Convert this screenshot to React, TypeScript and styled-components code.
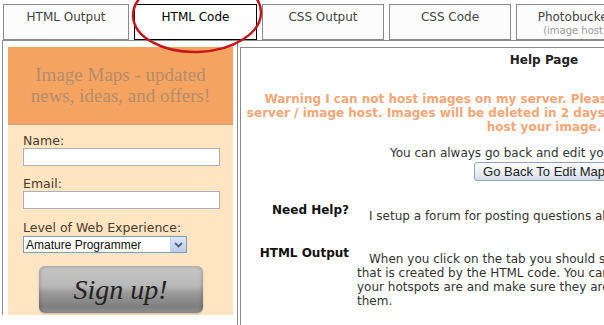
import React from 'react';
import styled, { createGlobalStyle } from 'styled-components';

const GlobalStyle = createGlobalStyle`
  html, body {
    margin: 0;
    padding: 0;
    background: #ffffff;
    overflow: hidden;
  }
  body {
    font-family: "DejaVu Sans", Verdana, sans-serif;
  }
`;

const Page = styled.div`
  position: relative;
  width: 850px;
  padding: 4px 0 0 2px;
`;

const TabBar = styled.div`
  display: flex;
  gap: 5px;
  margin-left: 1px;
`;

const Tab = styled.div<{ $active?: boolean; $width: number }>`
  box-sizing: border-box;
  width: ${(p) => p.$width}px;
  height: 36px;
  padding-top: 5px;
  border: 1px solid ${(p) => (p.$active ? '#000000' : '#8a8a8a')};
  background: ${(p) => (p.$active ? '#ffffff' : '#fcfcfc')};
  color: ${(p) => (p.$active ? '#000000' : '#444444')};
  font-size: 12px;
  line-height: 15px;
  text-align: center;
  white-space: nowrap;
  overflow: hidden;
`;

const TabSub = styled.div`
  font-size: 10px;
  line-height: 11px;
  color: #9a9a9a;
`;

const Content = styled.div`
  display: flex;
  align-items: flex-start;
`;

const Sidebar = styled.div`
  width: 225px;
  padding: 6px 4px 0 5px;
  border-top: 1px solid #8c8c8c;
  border-left: 1px solid #8c8c8c;
`;

const Promo = styled.div`
  box-sizing: border-box;
  height: 78px;
  padding-top: 17px;
  background: #f4a460;
  border-bottom: 2px solid #dba273;
  color: #b38c6c;
  font-family: "Liberation Serif", "Times New Roman", serif;
  font-size: 19px;
  line-height: 21px;
  text-align: center;
`;

const SignupForm = styled.div`
  display: flex;
  flex-direction: column;
  padding: 9px 13px 2px 15px;
  background: #ffe5c2;
`;

const FieldLabel = styled.div<{ $gap?: number }>`
  margin-top: ${(p) => p.$gap ?? 0}px;
  font-size: 12.5px;
  line-height: 14px;
  color: #4a3b2b;
`;

const TextInput = styled.input`
  box-sizing: border-box;
  width: 197px;
  height: 18px;
  margin: 0;
  border: 1px solid #a9b0b8;
  background: #ffffff;
`;

const SelectBox = styled.div`
  box-sizing: border-box;
  display: flex;
  align-items: center;
  width: 164px;
  height: 17px;
  margin-top: 1px;
  border: 1px solid #7f9db9;
  background: #ffffff;
`;

const SelectText = styled.span`
  flex: 1;
  padding-left: 2px;
  font-family: "Liberation Sans", Arial, sans-serif;
  font-size: 12px;
  color: #111111;
`;

const SelectArrow = styled.span`
  display: flex;
  align-items: center;
  justify-content: center;
  width: 15px;
  height: 15px;
  background: linear-gradient(#dfe8f8, #b9cbec);
  border-left: 1px solid #c3d3f0;
`;

const SignupButton = styled.div`
  align-self: center;
  margin: 13px 0 0 -2px;
  width: 164px;
  height: 47px;
  border-radius: 6px;
  background: linear-gradient(
    to bottom,
    #c8c8c8 0%,
    #b8b8b8 42%,
    #999999 58%,
    #7e7e7e 88%,
    #9c9c9c 100%
  );
  box-shadow: inset 0 0 4px rgba(0, 0, 0, 0.3), 0 1px 2px rgba(0, 0, 0, 0.2);
  display: flex;
  align-items: center;
  justify-content: center;
  font-family: "Liberation Serif", "Times New Roman", serif;
  font-style: italic;
  font-size: 28px;
  color: #222222;
`;

const MainFrame = styled.div`
  padding: 6px 0 0 2px;
  border-top: 1px solid #8c8c8c;
  border-left: 1px solid #8c8c8c;
`;

const MainInner = styled.div`
  width: 606px;
  height: 400px;
  border: 1px solid #8c8c8c;
  text-align: center;
  font-size: 12px;
  color: #333333;
`;

const Title = styled.div`
  margin-top: 5px;
  font-weight: bold;
  line-height: 15px;
  color: #222222;
`;

const Warning = styled.div`
  margin-top: 24px;
  font-weight: bold;
  line-height: 14px;
  color: #f6a676;
  white-space: nowrap;
`;

const Note = styled.div`
  margin-top: 12px;
  line-height: 14px;
`;

const BackButton = styled.button`
  margin-top: 2px;
  height: 19px;
  padding: 0 8px;
  border: 1px solid #8ea3c2;
  border-radius: 3px;
  background: linear-gradient(#fdfdfe, #e9edf3 55%, #d5dce7);
  font-family: "Liberation Sans", Arial, sans-serif;
  font-size: 13px;
  color: #222222;
`;

const HelpGrid = styled.div`
  display: grid;
  grid-template-columns: 108px 1fr;
  column-gap: 8px;
  row-gap: 23px;
  margin-top: 22px;
  text-align: left;
`;

const HelpLabel = styled.div`
  font-weight: bold;
  text-align: right;
  line-height: 14px;
  color: #111111;
`;

const HelpText = styled.div`
  padding-top: 6px;
  line-height: 14px;
  text-indent: 12px;
  white-space: nowrap;
`;

const Annotation = styled.svg`
  position: absolute;
  left: 0;
  top: 0;
  pointer-events: none;
`;

const tabs = [
  { label: 'HTML Output', width: 126 },
  { label: 'HTML Code', width: 123, active: true },
  { label: 'CSS Output', width: 122 },
  { label: 'CSS Code', width: 122 },
  { label: 'Photobucket', width: 118, sub: '(image host)' },
];

const Chevron = () => (
  <svg width="9" height="6" viewBox="0 0 9 6">
    <path d="M1 1 L4.5 4.5 L8 1" fill="none" stroke="#4d6185" strokeWidth="1.8" />
  </svg>
);

const App: React.FC = () => (
  <>
    <GlobalStyle />
    <Page>
      <TabBar>
        {tabs.map((t) => (
          <Tab key={t.label} $active={t.active} $width={t.width}>
            {t.label}
            {t.sub && <TabSub>{t.sub}</TabSub>}
          </Tab>
        ))}
      </TabBar>
      <Content>
        <Sidebar>
          <Promo>
            Image Maps - updated
            <br />
            news, ideas, and offers!
          </Promo>
          <SignupForm>
            <FieldLabel>Name:</FieldLabel>
            <TextInput type="text" />
            <FieldLabel $gap={11}>Email:</FieldLabel>
            <TextInput type="text" />
            <FieldLabel $gap={12}>Level of Web Experience:</FieldLabel>
            <SelectBox>
              <SelectText>Amature Programmer</SelectText>
              <SelectArrow>
                <Chevron />
              </SelectArrow>
            </SelectBox>
            <SignupButton>Sign up!</SignupButton>
          </SignupForm>
        </Sidebar>
        <MainFrame>
          <MainInner>
            <Title>Help Page</Title>
            <Warning>
              Warning I can not host images on my server. Please always use your own free web
              <br />
              server / image host. Images will be deleted in 2 days. We suggest using Photobucket to
              <br />
              host your image.
            </Warning>
            <Note>You can always go back and edit your image maps.</Note>
            <BackButton>Go Back To Edit Map</BackButton>
            <HelpGrid>
              <HelpLabel>Need Help?</HelpLabel>
              <HelpText>I setup a forum for posting questions about image maps.</HelpText>
              <HelpLabel>HTML Output</HelpLabel>
              <HelpText>
                When you click on the tab you should see the image map
                <br />
                that is created by the HTML code. You can mouse over to see where
                <br />
                your hotspots are and make sure they are where you want
                <br />
                them.
              </HelpText>
            </HelpGrid>
          </MainInner>
        </MainFrame>
      </Content>
      <Annotation width="604" height="60" viewBox="0 0 604 60">
        <ellipse
          cx="197"
          cy="14"
          rx="64"
          ry="38"
          fill="none"
          stroke="#c4161c"
          strokeWidth="2.5"
          transform="rotate(-2 197 14)"
        />
      </Annotation>
    </Page>
  </>
);

export default App;
